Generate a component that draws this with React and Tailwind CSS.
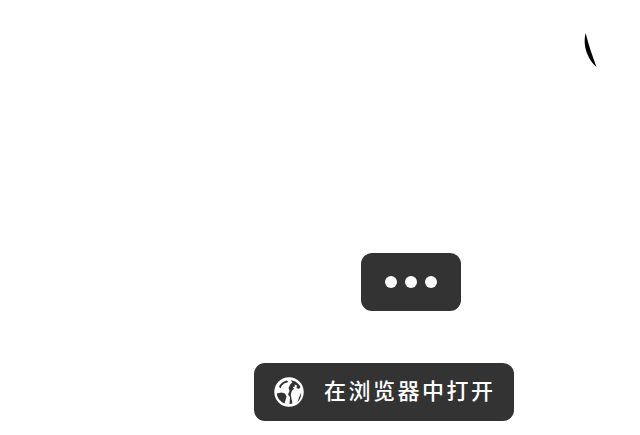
// Two dark toolbar buttons on an otherwise empty white page.
function GlobeIcon() {
  return (
    <svg className="block shrink-0" width="30" height="30" viewBox="0 0 30 30">
      <circle cx="15" cy="15" r="14.7" fill="#fff" />
      {/* ocean, cut out of the white disc in the button colour */}
      <path fill="#333333" d="M5 9.5 C6.5 6.8 9 4.6 12.5 3.6 L14.5 5 L10 6.5 L7.5 9 L6.5 11.5 Z" />
      <path
        fill="#333333"
        d="M2.8 16.5 L7.5 15.5 L11 16.5 L12.5 19.5 L11.5 23 L10.5 26.5 C6.5 25 3.2 21 2.8 16.5 Z"
      />
      <path
        fill="#333333"
        d="M16.8 3.2 L18.5 5.5 L16.5 7 L14.5 11 L15.5 14 L14 17.5 L16 20 L15.5 27 L18.5 26.6 L17.5 22 L16.8 17.5 L18 13.5 L20 12 L19 10 L21 9.5 L20.5 7.5 L23 8.5 L22.5 11 L25 12 L26.5 10 C25 6.5 21 3.5 16.8 3.2 Z"
      />
      <path fill="#333333" d="M27.2 15.5 L25 20.5 L23.5 25 C26 23 27.3 19.5 27.2 15.5 Z" />
    </svg>
  );
}

export default function App() {
  return (
    <div className="flex h-[435px] w-[640px] flex-col overflow-hidden bg-white pt-[33px] font-['Noto_Sans_CJK_SC',sans-serif]">
      <div className="flex justify-end pr-[43px]">
        <svg className="block" width="13" height="34" viewBox="0 0 13 34">
          <path d="M1.6 0 C-1 10 1.5 24 12.5 34 C8.5 23 4.5 12 1.6 0 Z" fill="#000" />
        </svg>
      </div>

      <button className="ml-[361px] mt-[186px] flex h-[58px] w-[100px] items-center justify-center gap-[8px] rounded-[11px] bg-[#333333]">
        <span className="size-[12px] rounded-full bg-white" />
        <span className="size-[12px] rounded-full bg-white" />
        <span className="size-[12px] rounded-full bg-white" />
      </button>

      <button className="ml-[254px] mt-[52px] flex h-[58px] w-[260px] items-center rounded-[11px] bg-[#333333] pl-[20px] text-white">
        <GlobeIcon />
        <span className="ml-[20px] mb-[6px] text-[22px] font-medium leading-none tracking-[2.5px]">在浏览器中打开</span>
      </button>
    </div>
  );
}
